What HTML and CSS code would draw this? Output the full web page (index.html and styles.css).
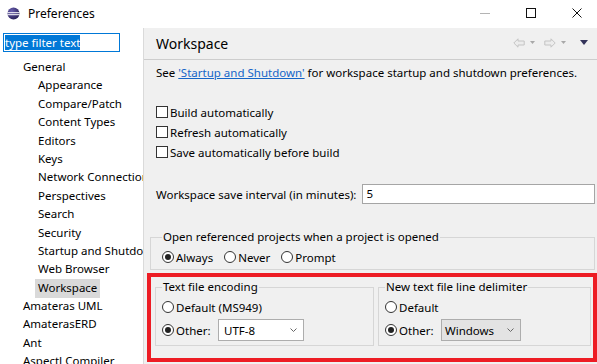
FILE: index.html
```html
<!DOCTYPE html>
<html lang="en">
<head>
    <meta charset="UTF-8">
    <title>Preferences</title>
    <link rel="stylesheet" href="styles.css">
</head>
<body>
    <div class="titlebar">
        <svg class="app-icon" width="13" height="13" viewBox="0 0 13 13">
            <defs>
                <radialGradient id="orb" cx="0.35" cy="0.3" r="0.8">
                    <stop offset="0" stop-color="#6a5fb0"/>
                    <stop offset="1" stop-color="#241c52"/>
                </radialGradient>
            </defs>
            <circle cx="6.5" cy="6.5" r="6" fill="url(#orb)"/>
            <rect x="0.5" y="5.2" width="12" height="1" fill="#fff"/>
            <rect x="0.5" y="7.2" width="12" height="1" fill="#fff"/>
        </svg>
        <span class="title">Preferences</span>
        <div class="controls">
            <span class="ctl">
                <svg width="10" height="10" viewBox="0 0 10 10"><line x1="0" y1="5.5" x2="10" y2="5.5" stroke="#b4b4b4"/></svg>
            </span>
            <span class="ctl">
                <svg width="10" height="10" viewBox="0 0 10 10"><rect x="0.5" y="0.5" width="9" height="9" fill="none" stroke="#111"/></svg>
            </span>
            <span class="ctl">
                <svg width="10" height="10" viewBox="0 0 10 10"><path d="M0.5 0.5 L9.5 9.5 M9.5 0.5 L0.5 9.5" stroke="#111"/></svg>
            </span>
        </div>
    </div>

    <div class="main">
        <div class="tree">
            <div class="filter"><span class="sel">type filter text</span></div>
            <ul class="nodes">
                <li class="lvl1"><span>General</span></li>
                <li class="lvl2"><span>Appearance</span></li>
                <li class="lvl2"><span>Compare/Patch</span></li>
                <li class="lvl2"><span>Content Types</span></li>
                <li class="lvl2"><span>Editors</span></li>
                <li class="lvl2"><span>Keys</span></li>
                <li class="lvl2"><span>Network Connections</span></li>
                <li class="lvl2"><span>Perspectives</span></li>
                <li class="lvl2"><span>Search</span></li>
                <li class="lvl2"><span>Security</span></li>
                <li class="lvl2"><span>Startup and Shutdown</span></li>
                <li class="lvl2"><span>Web Browser</span></li>
                <li class="lvl2 selected"><span>Workspace</span></li>
                <li class="lvl1"><span>Amateras UML</span></li>
                <li class="lvl1"><span>AmaterasERD</span></li>
                <li class="lvl1"><span>Ant</span></li>
                <li class="lvl1"><span>AspectJ Compiler</span></li>
            </ul>
        </div>

        <div class="page">
            <div class="page-header">
                <h1>Workspace</h1>
                <div class="nav">
                    <svg width="12" height="10" viewBox="0 0 12 10"><path d="M0.8 5 L5 0.8 V3 H11.2 V7 H5 V9.2 Z" fill="#ececec" stroke="#c4c4c4"/></svg>
                    <svg class="drop" width="5" height="3" viewBox="0 0 5 3"><polygon points="0,0 5,0 2.5,3" fill="#a8a8a8"/></svg>
                    <svg width="12" height="10" viewBox="0 0 12 10"><path d="M11.2 5 L7 0.8 V3 H0.8 V7 H7 V9.2 Z" fill="#ececec" stroke="#c4c4c4"/></svg>
                    <svg class="drop" width="5" height="3" viewBox="0 0 5 3"><polygon points="0,0 5,0 2.5,3" fill="#a8a8a8"/></svg>
                    <svg class="menu" width="8" height="5" viewBox="0 0 8 5"><polygon points="0,0 8,0 4,5" fill="#34345a"/></svg>
                </div>
            </div>

            <div class="content">
                <p class="desc">See <a href="#">'Startup and Shutdown'</a> for workspace startup and shutdown preferences.</p>

                <div class="checks">
                    <div class="check"><span class="box"></span>Build automatically</div>
                    <div class="check"><span class="box"></span>Refresh automatically</div>
                    <div class="check"><span class="box"></span>Save automatically before build</div>
                </div>

                <div class="interval">
                    <span>Workspace save interval (in minutes):</span>
                    <div class="field">5</div>
                </div>

                <fieldset class="group open-group">
                    <legend>Open referenced projects when a project is opened</legend>
                    <div class="row">
                        <span class="opt"><span class="radio on"></span>Always</span>
                        <span class="opt"><span class="radio"></span>Never</span>
                        <span class="opt"><span class="radio"></span>Prompt</span>
                    </div>
                </fieldset>

                <div class="highlight">
                    <fieldset class="group encoding">
                        <legend>Text file encoding</legend>
                        <div class="row"><span class="opt"><span class="radio"></span>Default (MS949)</span></div>
                        <div class="row combo-row">
                            <span class="opt wide"><span class="radio on"></span>Other:</span>
                            <div class="combo utf">UTF-8
                                <svg class="chev" width="7" height="4" viewBox="0 0 7 4"><polyline points="0.5,0.5 3.5,3.5 6.5,0.5" fill="none" stroke="#666"/></svg>
                            </div>
                        </div>
                    </fieldset>
                    <fieldset class="group delimiter">
                        <legend>New text file line delimiter</legend>
                        <div class="row"><span class="opt"><span class="radio"></span>Default</span></div>
                        <div class="row combo-row">
                            <span class="opt wide"><span class="radio on"></span>Other:</span>
                            <div class="combo gray">Windows
                                <svg class="chev" width="7" height="4" viewBox="0 0 7 4"><polyline points="0.5,0.5 3.5,3.5 6.5,0.5" fill="none" stroke="#666"/></svg>
                            </div>
                        </div>
                    </fieldset>
                </div>
            </div>
        </div>
    </div>
</body>
</html>
```
FILE: styles.css
```css
body {
    margin: 0;
    width: 597px;
    height: 364px;
    overflow: hidden;
    font-family: "Noto Sans", "Segoe UI", sans-serif;
    font-size: 11.5px;
    color: #000;
    background: #fff;
}

/* barra de titulo */
.titlebar {
    height: 28px;
    display: flex;
    align-items: center;
    padding-bottom: 2px;
    box-sizing: border-box;
    background: #fff;
}
.app-icon {
    margin-left: 7px;
}
.title {
    margin-left: 8px;
    font-size: 12px;
}
.controls {
    margin-left: auto;
    margin-right: -3px;
    display: flex;
}
.ctl {
    width: 46px;
    display: flex;
    justify-content: center;
    align-items: center;
}

.main {
    display: flex;
    height: 336px;
}

/* arvore da esquerda */
.tree {
    width: 143px;
    border-right: 1px solid #dadada;
    overflow: hidden;
    background: #fff;
}
.filter {
    margin: 5px 0 0 3px;
    width: 117px;
    height: 19px;
    box-sizing: border-box;
    border: 1px solid #0078d7;
    padding: 1px 0 0 1px;
}
.sel {
    display: inline-block;
    background: #0078d7;
    color: #fff;
    line-height: 15px;
    vertical-align: top;
}
.nodes {
    list-style: none;
    margin: 6px 0 0;
    padding: 0;
}
.nodes li {
    height: 18.4px;
    line-height: 18.4px;
    white-space: nowrap;
}
.nodes li span {
    display: inline-block;
    padding: 0 3px;
    height: 19px;
    line-height: 18px;
}
.lvl1 {
    padding-left: 20px;
}
.lvl2 {
    padding-left: 35px;
}
.selected span {
    background: #d9d9d9;
}

/* pagina da direita */
.page {
    flex: 1;
    background: #f0f0f0;
}
.page-header {
    height: 31px;
    border-bottom: 1px solid #cdcdcd;
    display: flex;
    align-items: center;
    padding: 0 9px 0 12px;
}
.page-header h1 {
    margin: 0;
    font-size: 14px;
    font-weight: normal;
    line-height: 16px;
}
.nav {
    margin-left: auto;
    display: flex;
    align-items: center;
    gap: 5px;
    padding-bottom: 2px;
}
.nav .drop {
    margin-right: 4px;
}
.nav .menu {
    margin-left: 5px;
}

.content {
    padding: 5px 2px 0 12px;
}
.desc {
    margin: 0;
    line-height: 16px;
    white-space: nowrap;
}
.desc a {
    color: #1565c8;
}
.checks {
    margin-top: 21px;
}
.check {
    height: 20px;
    display: flex;
    align-items: center;
}
.box {
    width: 12px;
    height: 12px;
    box-sizing: border-box;
    border: 1px solid #333;
    background: #fff;
    margin-right: 2px;
}
.interval {
    margin-top: 22px;
    height: 20px;
    display: flex;
    align-items: center;
    gap: 6px;
}
.field {
    flex: 1;
    height: 20px;
    box-sizing: border-box;
    border: 1px solid #a5a5a5;
    background: #fff;
    padding-left: 3px;
    line-height: 18px;
}

.group {
    margin: 0;
    border: 1px solid #d6d6d6;
    min-width: 0;
}
.group legend {
    padding: 0 1px;
    line-height: 16px;
}
.row {
    height: 16px;
    display: flex;
    align-items: center;
}
.opt {
    display: flex;
    align-items: center;
    margin-right: 11px;
}
.radio {
    width: 12px;
    height: 12px;
    box-sizing: border-box;
    border: 1px solid #333;
    border-radius: 50%;
    background: #fff;
    margin-right: 2px;
    display: flex;
    align-items: center;
    justify-content: center;
}
.radio.on::after {
    content: "";
    width: 6px;
    height: 6px;
    border-radius: 50%;
    background: #222;
}

.open-group {
    margin: 25px 0 0 -6px;
    padding: 4px 0 4px 11px;
}

/* caixa vermelha */
.highlight {
    margin: 3px -2px 0 -9px;
    border: 4px solid #ed1c24;
    padding: 2px 2px 12px 4px;
    display: flex;
    gap: 4px;
}
.highlight .group {
    padding: 4px 6px;
}
.encoding {
    width: 219px;
    box-sizing: border-box;
}
.delimiter {
    flex: 1;
}
.combo-row {
    height: 22px;
    margin-top: 4px;
}
.opt.wide {
    width: 56px;
    margin-right: 0;
}
.combo {
    height: 22px;
    box-sizing: border-box;
    border: 1px solid #adadad;
    background: #fff;
    display: flex;
    align-items: center;
    justify-content: space-between;
    padding: 0 6px 0 5px;
}
.combo.utf {
    width: 86px;
}
.combo.gray {
    width: 80px;
    background: #e3e3e3;
    padding-left: 3px;
}
```
